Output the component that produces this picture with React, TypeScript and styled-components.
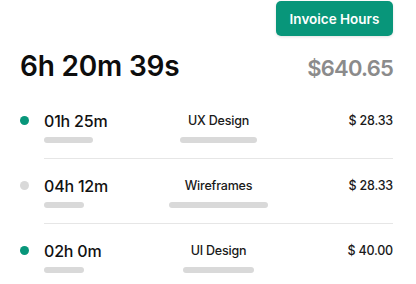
import React from "react";
import styled, { createGlobalStyle } from "styled-components";

const Global = createGlobalStyle`
  html, body { margin: 0; padding: 0; background: #ffffff; }
  body { font-family: Inter, "Liberation Sans", sans-serif; color: #111111; }
`;

const Page = styled.div`
  width: 416px;
  box-sizing: border-box;
  padding: 1px 23px 0 20px;
  display: flex;
  flex-direction: column;
`;

const Toolbar = styled.div`
  display: flex;
  justify-content: flex-end;
`;

const InvoiceButton = styled.button`
  height: 35px;
  width: 117px;
  border: none;
  border-radius: 5px;
  background: #08967a;
  color: #ffffff;
  font-family: inherit;
  font-size: 13.5px;
  font-weight: 600;
  box-shadow: 0 1px 3px rgba(0, 0, 0, 0.12);
  cursor: pointer;
  padding: 0;
`;

const Summary = styled.div`
  margin-top: 13px;
  display: flex;
  justify-content: space-between;
  align-items: baseline;
  line-height: 34px;
`;

const Total = styled.div`
  font-size: 28px;
  font-weight: 600;
  letter-spacing: -0.2px;
  color: #0d0d0d;
`;

const Earned = styled.div`
  font-size: 22px;
  font-weight: 600;
  color: #8b8b8b;
  letter-spacing: -0.8px;
`;

const List = styled.div`
  margin-top: 9px;
  display: flex;
  flex-direction: column;
`;

const Row = styled.div`
  display: flex;
`;

const DotCol = styled.div`
  width: 24px;
  flex: none;
  padding-top: 22px;
`;

const Dot = styled.span<{ $active: boolean }>`
  display: block;
  width: 9px;
  height: 9px;
  border-radius: 50%;
  background: ${(p) => (p.$active ? "#08967a" : "#d9d9d9")};
`;

const Body = styled.div<{ $last: boolean }>`
  flex: 1;
  display: grid;
  grid-template-columns: 1fr auto 1fr;
  padding: 15px 0;
  border-bottom: ${(p) => (p.$last ? "none" : "1px solid #e6e6e6")};
`;

const Cell = styled.div<{ $align: "left" | "center" | "right" }>`
  display: flex;
  flex-direction: column;
  align-items: ${(p) =>
    p.$align === "left" ? "flex-start" : p.$align === "center" ? "center" : "flex-end"};
  gap: 4px;
`;

const Duration = styled.div`
  font-size: 16px;
  font-weight: 500;
  line-height: 24px;
  letter-spacing: -0.2px;
  color: #111111;
`;

const Label = styled.div`
  font-size: 12.5px;
  font-weight: 500;
  line-height: 24px;
  letter-spacing: -0.2px;
  color: #1a1a1a;
`;

const Bar = styled.div`
  height: 6px;
  border-radius: 3px;
  background: #d9d9d9;
`;

type Entry = {
  active: boolean;
  time: string;
  task: string;
  amount: string;
  timeBar: number;
  taskBar: number;
};

const entries: Entry[] = [
  { active: true, time: "01h 25m", task: "UX Design", amount: "$ 28.33", timeBar: 49, taskBar: 77 },
  { active: false, time: "04h 12m", task: "Wireframes", amount: "$ 28.33", timeBar: 40, taskBar: 99 },
  { active: true, time: "02h 0m", task: "UI Design", amount: "$ 40.00", timeBar: 40, taskBar: 71 },
];

export default function App() {
  return (
    <>
      <Global />
      <Page>
        <Toolbar>
          <InvoiceButton>Invoice Hours</InvoiceButton>
        </Toolbar>
        <Summary>
          <Total>6h 20m 39s</Total>
          <Earned>$640.65</Earned>
        </Summary>
        <List>
          {entries.map((e, i) => (
            <Row key={i}>
              <DotCol>
                <Dot $active={e.active} />
              </DotCol>
              <Body $last={i === entries.length - 1}>
                <Cell $align="left">
                  <Duration>{e.time}</Duration>
                  <Bar style={{ width: e.timeBar }} />
                </Cell>
                <Cell $align="center">
                  <Label>{e.task}</Label>
                  <Bar style={{ width: e.taskBar }} />
                </Cell>
                <Cell $align="right">
                  <Label>{e.amount}</Label>
                </Cell>
              </Body>
            </Row>
          ))}
        </List>
      </Page>
    </>
  );
}
